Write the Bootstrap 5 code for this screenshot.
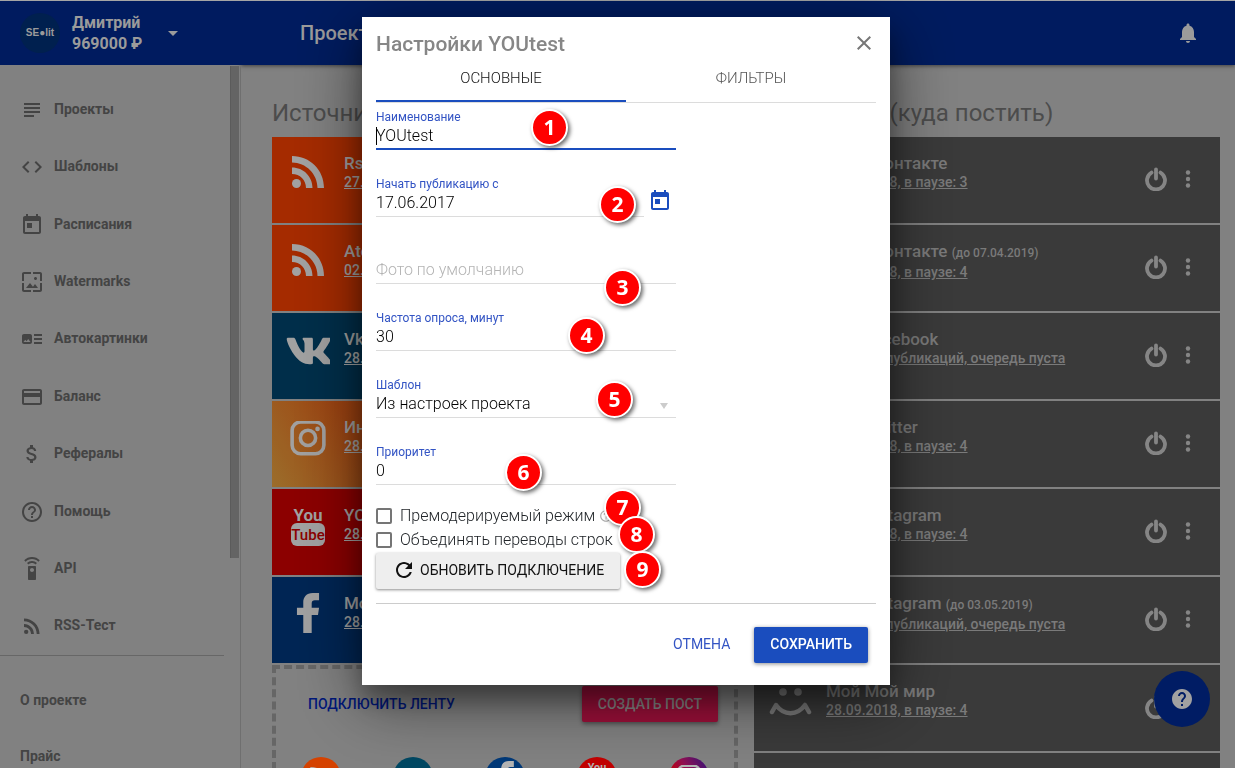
<!DOCTYPE html>
<html lang="ru">
<head>
<meta charset="utf-8">
<meta name="viewport" content="width=device-width, initial-scale=1">
<title>Настройки YOUtest</title>
<link href="https://cdn.jsdelivr.net/npm/bootstrap@5.3.0/dist/css/bootstrap.min.css" rel="stylesheet">
<style>
:root{--brand:#1a4dbe}
html,body{height:100%}
body{font-family:Roboto,"Liberation Sans",sans-serif;background:#909090;overflow:hidden;font-size:16px;line-height:20px}
svg{fill:currentColor;flex:none}
.i24{width:24px;height:24px}
/* page frame */
.shell{height:100vh;border-top:1px solid #b8b8b8;overflow:hidden}
.side{width:241px;border-right:1px solid #7c7c7c;position:relative;flex:none}
.side-head{height:64px;background:#001f6a;color:#adadad;padding-left:20px;margin-right:-1px}
.avatar{width:40px;height:40px;background:#002458;font:bold 10px/40px "Liberation Sans",sans-serif;flex:none}
.who{font-weight:700;line-height:21px;margin-left:12px;width:96px}
.menu{height:574px;margin-top:16px}
.menu a,.menu2 a{color:#4c4c4c;font:bold 14px/20px Roboto,sans-serif;text-decoration:none}
.menu a{padding-left:20px;gap:10px}
.menu a span{margin-bottom:2px}
.menu2{border-top:1px solid #737373;margin-right:16px;padding-top:16px}
.menu2 a{height:56px;padding-left:20px}
.scroller{position:absolute;right:1px;top:65px;width:9px;height:492px;background:#707070;border-left:1px solid #666}
.topbar{height:64px;background:#001f6a;color:#adadad;padding:0 35px 0 59px;box-shadow:0 1px 4px rgba(0,0,0,.5)}
.topbar h1{font-size:20px;font-weight:500;line-height:24px}
.board{padding:32px 15px 0 31px;gap:16px}
.board h2{font-size:24px;font-weight:400;line-height:32px;color:#555;margin:0 0 8px}
.feed{height:86px;margin-bottom:2px;padding:16px 29px 0 14px;color:#b4b4b4}
.feed .pic{width:44px;height:44px;margin-right:14px}
.feed .txt{flex:1;min-width:0;font-size:17px;font-weight:500;line-height:20px;white-space:nowrap}
.feed .txt a{display:block;color:inherit;font-size:14px;line-height:18px}
.feed small{font-size:12px}
.c-rss{background:#b83000}.c-vk{background:#003453}.c-yt{background:#9c0000}.c-fb{background:#002a5e}
.c-ig{background:linear-gradient(60deg,#ad7a30 0,#b04c14 22%,#b83000 50%)}
.target{background:#414141;color:#888}
.target .acts{margin-top:14px;gap:17px;color:#959595}
.target .acts button{background:none;border:0;padding:0;color:inherit;display:flex;height:24px}
.connect{border:4px dashed #727272;height:190px;padding:17px 16px}
.connect .btn{font:500 14px/20px Roboto,sans-serif;border-radius:2px;padding:7px 15px}
.b-link{color:#001a88}
.b-post{background:#ae1140;color:#999;box-shadow:0 2px 4px rgba(0,0,0,.4)}
.nets{margin-top:35px;gap:52px}
.nets span{width:40px;height:40px;color:#c8c8c8}
.n1{background:#ee4a00}.n2{background:#00506e}.n3{background:#003f86}.n4{background:#d80000}
.n5{background:linear-gradient(60deg,#e00000 20%,#a0105c 55%,#30148c)}
.fab{position:fixed;right:25px;bottom:41px;width:56px;height:56px;border:0;background:#002070;color:#b4b4b4;z-index:5}
/* dialog */
.modal-backdrop{opacity:.1}
.modal{padding-left:17px}
.modal-dialog{max-width:528px;margin:17px auto}
.modal-content{border:0;border-radius:0;padding:0 14px;height:auto;box-shadow:0 15px 20px rgba(0,0,0,.25),0 15px 60px rgba(0,0,0,.55)}
.dlg-head{height:37px;padding-top:14px}
.dlg-head h3{font-size:21px;font-weight:500;line-height:26px;color:#868686;margin:0}
.dlg-head button{border:0;background:none;padding:0;color:#777;width:24px;height:24px;display:flex}
.tabs{border-bottom:1px solid #dcdcdc}
.tabs button{height:48px;border:0;border-bottom:2px solid transparent;background:none;font:300 15px/20px Roboto,sans-serif;color:#555;padding:2px 0 0}
.tabs .on{border-color:var(--brand);color:#111}
.fields{width:300px;padding-top:6px}
.fld{margin-bottom:26px;position:relative}
.fld label{display:block;font-size:12px;line-height:16px;height:16px;color:#3354c4}
.fld input,.fld select{display:block;width:100%;height:25px;border:0;border-bottom:1px solid #dcdcdc;border-radius:0;padding:0 0 3px;background:none;font:300 16px/20px Roboto,sans-serif;color:#000;outline:0;appearance:none}
.fld .cur{border-bottom:2px solid var(--brand)}
.fld.act::after{content:"";position:absolute;left:0;top:18px;height:18px;width:1px;background:#000}
.fld ::placeholder{color:#b4b4b4;opacity:1}
.fld .arrow{position:absolute;right:8px;top:26px;border:4px solid transparent;border-top:6px solid #ccc;border-bottom:0}
.cal{border:0;background:none;padding:0;color:var(--brand);display:flex;margin:8px 4px 0}
.ticks{margin-top:19px}
.tick{height:24px;gap:8px;font-weight:300}
.tick input{width:16px;height:16px;margin:0;border:2px solid #757575}
.tick .form-check-input{border-radius:2px;flex:none}
.tick .hint{width:14px;height:14px;margin-left:-4px;color:#aaa}
.dlg-btn{font:500 14px/20px Roboto,sans-serif;border:0;border-radius:2px;height:36px;padding:0 16px 2px}
.b-refresh{background:#eee;color:#111;font-weight:400;box-shadow:0 1px 3px rgba(0,0,0,.45);gap:4px;margin-top:1px}
.b-save{background:var(--brand);color:#fff;box-shadow:0 1px 4px rgba(0,0,0,.45)}
.b-cancel{background:none;color:#3354c4;font-weight:400}
.dlg-foot{border-top:1px solid #ccc;margin-top:14px;padding:23px 8px 22px;gap:8px}
/* numbered callouts lying over the form */
.pin{position:absolute;width:37px;height:37px;margin:-19px 0 0 -18px;border:2px solid #fff;border-radius:50%;background:#f00;color:#fff;font:bold 21px/33px "Open Sans",sans-serif;text-align:center;box-shadow:2px 2px 4px rgba(0,0,0,.6)}
.p1{left:187px;top:111px}.p2{left:255px;top:188px}.p3{left:260px;top:271px}.p4{left:224px;top:319px}.p5{left:252px;top:383px}
.p6{left:161px;top:456px}.p7{left:260px;top:491px}.p8{left:274px;top:518px}.p9{left:280px;top:553px}
</style>
</head>
<body>
<svg class="d-none" xmlns="http://www.w3.org/2000/svg">
<symbol id="rss" viewBox="0 0 24 24"><circle cx="6.18" cy="17.82" r="2.18"/><path d="M4 4.44v2.83c7.03 0 12.73 5.7 12.73 12.73h2.83c0-8.59-6.97-15.56-15.56-15.56zm0 5.66v2.83c3.9 0 7.07 3.17 7.07 7.07h2.83c0-5.47-4.43-9.9-9.9-9.9z"/></symbol>
<symbol id="rssbig" viewBox="-1 3 44 44"><circle cx="9.5" cy="33.5" r="4.5"/><path d="M5 6C23 6 37 20 37 38h-6.500C30.500 24 19 12.500 5 12.500zM5 17.500C16.500 17.500 25.500 26.500 25.500 38H19c0-8-6-14-14-14z"/></symbol>
<symbol id="vk" viewBox="10 96 529 320"><path d="M545 117.7c3.7-12.5 0-21.7-17.8-21.7h-58.9c-15 0-21.9 7.9-25.6 16.7 0 0-30 73.1-72.4 120.5-13.7 13.7-20 18.1-27.500 18.1-3.7 0-9.4-4.4-9.4-16.900V117.700c0-15-4.2-21.7-16.6-21.7h-92.6c-9.4 0-15 7-15 13.5 0 14.2 21.2 17.5 23.4 57.5v86.8c0 19-3.4 22.5-10.9 22.5-20 0-68.6-73.4-97.4-157.4-5.8-16.3-11.500-22.9-26.6-22.9H38.800c-16.8 0-20.2 7.9-20.2 16.7 0 15.6 20 93.1 93.1 195.5C160.4 378.1 229 416 291.400 416c37.500 0 42.1-8.4 42.1-22.9 0-66.800-3.4-73.1 15.4-73.1 8.7 0 23.700 4.4 58.7 38.1 40 40 46.6 57.9 69 57.9h58.9c16.8 0 25.3-8.4 20.4-25-11.2-34.9-86.9-106.7-90.3-111.5-8.7-11.2-6.2-16.2 0-26.2.1-.1 72-101.3 79.4-135.6z"/></symbol>
<symbol id="ig" viewBox="0 1 34 34"><rect x="2" y="2" width="30" height="30" rx="8" fill="none" stroke="currentColor" stroke-width="3.400"/><circle cx="17" cy="17" r="7.200" fill="none" stroke="currentColor" stroke-width="3.400"/><circle cx="26" cy="8.500" r="2.200"/></symbol>
<symbol id="yt" viewBox="0 0 44 44"><text x="22" y="16" text-anchor="middle" font-family="Roboto" font-weight="700" font-size="17">You</text><rect x="5" y="18" width="34" height="23" rx="6"/><text x="22" y="35" text-anchor="middle" font-family="Roboto" font-size="15" font-weight="500" fill="#9c0000">Tube</text></symbol>
<symbol id="fb" viewBox="0 0 21 38"><path d="M14 38V21h6l1-7h-7v-4c0-2 1-3 3-3h4V0h-6C9 0 6 4 6 9v5H0v7h6v17z"/></symbol>
<symbol id="mm" viewBox="0 0 44 44"><circle cx="15" cy="11" r="3.800"/><circle cx="30" cy="11" r="3.800"/><path d="M4 31l4-7c8 11 21 11 29 0l4 7" fill="none" stroke="currentColor" stroke-width="4.500" stroke-linecap="round" stroke-linejoin="round"/></symbol>
<symbol id="pow" viewBox="0 0 24 24"><path d="M7.500 5.600a9 9 0 1 0 9 0M12 2.500v9" fill="none" stroke="currentColor" stroke-width="3.800" stroke-linecap="round"/></symbol>
<symbol id="dots" viewBox="0 0 6 18"><circle cx="3" cy="2.500" r="2.200"/><circle cx="3" cy="9" r="2.200"/><circle cx="3" cy="15.500" r="2.200"/></symbol>
<symbol id="today" viewBox="0 0 24 24"><path d="M19 3h-1V1h-2v2H8V1H6v2H5c-1.110 0-1.990.9-1.990 2L3 19c0 1.100.89 2 2 2h14c1.100 0 2-.9 2-2V5c0-1.100-.9-2-2-2zm0 16H5V8h14v11zM7 10h5v5H7z"/></symbol>
<symbol id="helpo" viewBox="0 0 24 24"><path d="M11 18h2v-2h-2v2zm1-16C6.480 2 2 6.480 2 12s4.480 10 10 10 10-4.480 10-10S17.520 2 12 2zm0 18c-4.410 0-8-3.590-8-8s3.590-8 8-8 8 3.590 8 8-3.590 8-8 8zm0-14c-2.210 0-4 1.790-4 4h2c0-1.100.9-2 2-2s2 .9 2 2c0 2-3 1.750-3 5h2c0-2.250 3-2.500 3-5 0-2.210-1.790-4-4-4z"/></symbol>
</svg>

<div class="shell d-flex">
<aside class="side">
  <div class="side-head d-flex align-items-center">
    <div class="avatar rounded-circle text-center">SE●lit</div>
    <div class="who">Дмитрий<br>969000 ₽</div>
    <svg width="10" height="5" viewBox="0 0 10 5"><path d="M0 0h10L5 5z"/></svg>
  </div>
  <nav class="menu d-flex flex-column">
    <a href="#" class="d-flex align-items-center flex-fill"><svg class="i24" viewBox="0 0 24 24"><path d="M14 17H4v2h10v-2zm6-8H4v2h16V9zM4 15h16v-2H4v2zM4 5v2h16V5H4z"/></svg><span>Проекты</span></a>
    <a href="#" class="d-flex align-items-center flex-fill"><svg class="i24" viewBox="0 0 24 24"><path d="M9.400 16.600L4.800 12l4.600-4.600L8 6l-6 6 6 6 1.400-1.400zm5.200 0l4.600-4.600-4.600-4.600L16 6l6 6-6 6-1.400-1.400z"/></svg><span>Шаблоны</span></a>
    <a href="#" class="d-flex align-items-center flex-fill"><svg class="i24"><use href="#today"/></svg><span>Расписания</span></a>
    <a href="#" class="d-flex align-items-center flex-fill"><svg class="i24" viewBox="0 0 24 24"><path d="M4 4h7V2H4c-1.100 0-2 .9-2 2v7h2V4zm6 9l-4 5h12l-3-4-2.030 2.710L10 13zm7-4.500c0-.83-.67-1.500-1.500-1.500S14 7.670 14 8.500s.67 1.500 1.500 1.500S17 9.330 17 8.500zM20 2h-7v2h7v7h2V4c0-1.100-.9-2-2-2zm0 18h-7v2h7c1.100 0 2-.9 2-2v-7h-2v7zM4 13H2v7c0 1.100.9 2 2 2h7v-2H4v-7z"/></svg><span>Watermarks</span></a>
    <a href="#" class="d-flex align-items-center flex-fill"><svg class="i24" viewBox="0 0 24 24"><path d="M22 13h-8v-2h8v2zm0-6h-8v2h8V7zm-8 10h8v-2h-8v2zm-2-8v6c0 1.100-.9 2-2 2H4c-1.100 0-2-.9-2-2V9c0-1.100.9-2 2-2h6c1.100 0 2 .9 2 2zm-1.500 6l-2.250-3-1.750 2.260-1.250-1.510L3.500 15h7z"/></svg><span>Автокартинки</span></a>
    <a href="#" class="d-flex align-items-center flex-fill"><svg class="i24" viewBox="0 0 24 24"><path d="M20 4H4c-1.110 0-1.990.89-1.990 2L2 18c0 1.110.89 2 2 2h16c1.110 0 2-.89 2-2V6c0-1.110-.89-2-2-2zm0 14H4v-6h16v6zm0-10H4V6h16v2z"/></svg><span>Баланс</span></a>
    <a href="#" class="d-flex align-items-center flex-fill"><svg class="i24" viewBox="0 0 24 24"><path d="M11.800 10.900c-2.270-.59-3-1.200-3-2.150 0-1.090 1.010-1.850 2.700-1.850 1.780 0 2.440.85 2.500 2.100h2.210c-.07-1.720-1.120-3.300-3.210-3.810V3h-3v2.160c-1.940.42-3.500 1.680-3.500 3.610 0 2.310 1.910 3.460 4.700 4.130 2.500.6 3 1.480 3 2.410 0 .69-.49 1.790-2.700 1.790-2.060 0-2.870-.92-2.980-2.100h-2.200c.12 2.190 1.760 3.420 3.680 3.830V21h3v-2.150c1.950-.37 3.500-1.500 3.500-3.550 0-2.840-2.430-3.810-4.700-4.400z"/></svg><span>Рефералы</span></a>
    <a href="#" class="d-flex align-items-center flex-fill"><svg class="i24"><use href="#helpo"/></svg><span>Помощь</span></a>
    <a href="#" class="d-flex align-items-center flex-fill"><svg class="i24" viewBox="0 0 24 24"><path d="M15 9H9c-.55 0-1 .45-1 1v12c0 .55.45 1 1 1h6c.55 0 1-.45 1-1V10c0-.55-.45-1-1-1zm-3 6c-1.100 0-2-.9-2-2s.9-2 2-2 2 .9 2 2-.9 2-2 2zM7.050 6.050l1.410 1.410C9.370 6.560 10.620 6 12 6s2.630.56 3.540 1.460l1.410-1.410C15.680 4.780 13.930 4 12 4s-3.680.78-4.950 2.050zM12 0C8.960 0 6.210 1.230 4.220 3.220l1.410 1.410C7.260 3.010 9.510 2 12 2s4.740 1.010 6.360 2.640l1.410-1.410C17.790 1.230 15.040 0 12 0z"/></svg><span>API</span></a>
    <a href="#" class="d-flex align-items-center flex-fill"><svg class="i24"><use href="#rss"/></svg><span>RSS-Тест</span></a>
  </nav>
  <nav class="menu2">
    <a href="#" class="d-flex align-items-center">О проекте</a>
    <a href="#" class="d-flex align-items-center">Прайс</a>
  </nav>
  <div class="scroller"></div>
</aside>

<div class="flex-fill">
  <header class="topbar d-flex align-items-center justify-content-between">
    <h1 class="m-0">Проекты</h1>
    <svg class="i24" viewBox="0 0 24 24"><path d="M12 22c1.100 0 2-.9 2-2h-4c0 1.100.89 2 2 2zm6-6v-5c0-3.070-1.640-5.640-4.500-6.320V4c0-.83-.67-1.500-1.500-1.500s-1.500.67-1.500 1.500v.68C7.630 5.360 6 7.920 6 11v5l-2 2v1h16v-1l-2-2z"/></svg>
  </header>
  <main class="board d-flex">
    <section class="col">
      <h2>Источники (откуда)</h2>
      <div class="feed c-rss d-flex"><svg class="pic"><use href="#rssbig"/></svg><div class="txt">Rss лента<a href="#">27.09.2018, в паузе: 3</a></div></div>
      <div class="feed c-rss d-flex"><svg class="pic"><use href="#rssbig"/></svg><div class="txt">Atom лента<a href="#">02.09.2018, в паузе: 3</a></div></div>
      <div class="feed c-vk d-flex"><svg class="pic"><use href="#vk"/></svg><div class="txt">Vk группа<a href="#">28.09.2018, в паузе: 4</a></div></div>
      <div class="feed c-ig d-flex"><svg class="pic p-1"><use href="#ig"/></svg><div class="txt">Инстаграм<a href="#">28.09.2018, в паузе: 4</a></div></div>
      <div class="feed c-yt d-flex"><svg class="pic"><use href="#yt"/></svg><div class="txt">YOUtest<a href="#">28.09.2018, в паузе: 4</a></div></div>
      <div class="feed c-fb d-flex"><svg class="pic pb-1"><use href="#fb"/></svg><div class="txt">Мой Facebook<a href="#">28.09.2018, в паузе: 4</a></div></div>
      <div class="connect">
        <div class="d-flex justify-content-between">
          <button type="button" class="btn b-link">ПОДКЛЮЧИТЬ ЛЕНТУ</button>
          <button type="button" class="btn b-post">СОЗДАТЬ ПОСТ</button>
        </div>
        <div class="nets d-flex justify-content-center">
          <span class="n1 rounded-circle d-flex p-1"><svg width="32" height="32"><use href="#rss"/></svg></span>
          <span class="n2 rounded-circle d-flex p-2"><svg class="i24 pt-2"><use href="#vk"/></svg></span>
          <span class="n3 rounded-circle d-flex p-1"><svg width="32" height="32"><use href="#fb"/></svg></span>
          <span class="n4 rounded-circle d-flex p-1"><svg width="32" height="28"><use href="#yt"/></svg></span>
          <span class="n5 rounded-circle d-flex p-2"><svg class="i24"><use href="#ig"/></svg></span>
        </div>
      </div>
    </section>
    <section class="col">
      <h2>Приёмники (куда постить)</h2>
      <div class="feed target d-flex"><svg class="pic"><use href="#vk"/></svg><div class="txt">Мой Вконтакте<a href="#">27.09.2018, в паузе: 3</a></div><div class="acts d-flex"><button aria-label="Питание"><svg class="i24"><use href="#pow"/></svg></button><button aria-label="Меню"><svg width="6" height="24"><use href="#dots"/></svg></button></div></div>
      <div class="feed target d-flex"><svg class="pic"><use href="#vk"/></svg><div class="txt">Мой Вконтакте <small>(до 07.04.2019)</small><a href="#">28.09.2018, в паузе: 4</a></div><div class="acts d-flex"><button aria-label="Питание"><svg class="i24"><use href="#pow"/></svg></button><button aria-label="Меню"><svg width="6" height="24"><use href="#dots"/></svg></button></div></div>
      <div class="feed target d-flex"><svg class="pic"><use href="#fb"/></svg><div class="txt">Мой Facebook<a href="#">Не было публикаций, очередь пуста</a></div><div class="acts d-flex"><button aria-label="Питание"><svg class="i24"><use href="#pow"/></svg></button><button aria-label="Меню"><svg width="6" height="24"><use href="#dots"/></svg></button></div></div>
      <div class="feed target d-flex"><svg class="pic"></svg><div class="txt">Мой Twitter<a href="#">28.09.2018, в паузе: 4</a></div><div class="acts d-flex"><button aria-label="Питание"><svg class="i24"><use href="#pow"/></svg></button><button aria-label="Меню"><svg width="6" height="24"><use href="#dots"/></svg></button></div></div>
      <div class="feed target d-flex"><svg class="pic p-1"><use href="#ig"/></svg><div class="txt">Мой Instagram<a href="#">28.09.2018, в паузе: 4</a></div><div class="acts d-flex"><button aria-label="Питание"><svg class="i24"><use href="#pow"/></svg></button><button aria-label="Меню"><svg width="6" height="24"><use href="#dots"/></svg></button></div></div>
      <div class="feed target d-flex"><svg class="pic p-1"><use href="#ig"/></svg><div class="txt">Мой Instagram <small>(до 03.05.2019)</small><a href="#">Не было публикаций, очередь пуста</a></div><div class="acts d-flex"><button aria-label="Питание"><svg class="i24"><use href="#pow"/></svg></button><button aria-label="Меню"><svg width="6" height="24"><use href="#dots"/></svg></button></div></div>
      <div class="feed target d-flex"><svg class="pic"><use href="#mm"/></svg><div class="txt">Мой Мой мир<a href="#">28.09.2018, в паузе: 4</a></div><div class="acts d-flex"><button aria-label="Питание"><svg class="i24"><use href="#pow"/></svg></button><button aria-label="Меню"><svg width="6" height="24"><use href="#dots"/></svg></button></div></div>
      <div class="feed target"></div>
    </section>
  </main>
</div>
</div>
<button type="button" class="fab rounded-circle d-flex align-items-center justify-content-center" aria-label="Справка"><svg class="i24" viewBox="0 0 24 24"><path d="M12 2C6.480 2 2 6.480 2 12s4.480 10 10 10 10-4.480 10-10S17.520 2 12 2zm1 17h-2v-2h2v2zm2.070-7.750l-.9.92C13.450 12.900 13 13.500 13 15h-2v-.5c0-1.100.45-2.100 1.170-2.830l1.240-1.260c.37-.36.59-.86.59-1.410 0-1.100-.9-2-2-2s-2 .9-2 2H8c0-2.210 1.790-4 4-4s4 1.790 4 4c0 .88-.36 1.680-.93 2.250z"/></svg></button>

<div class="modal-backdrop"></div>
<div class="modal d-block overflow-hidden" role="dialog" aria-labelledby="dlgTitle">
<div class="modal-dialog">
<form class="modal-content">
  <div class="dlg-head d-flex justify-content-between">
    <h3 id="dlgTitle">Настройки YOUtest</h3>
    <button type="button" aria-label="Закрыть"><svg class="i24" viewBox="0 0 24 24"><path d="M19 6.410L17.590 5 12 10.590 6.410 5 5 6.410 10.590 12 5 17.590 6.410 19 12 13.410 17.590 19 19 17.590 13.410 12z"/></svg></button>
  </div>
  <div class="tabs d-flex">
    <button type="button" class="on col">ОСНОВНЫЕ</button>
    <button type="button" class="col">ФИЛЬТРЫ</button>
  </div>
  <div class="fields">
    <div class="fld act"><label for="fName">Наименование</label><input id="fName" class="cur" type="text" value="YOUtest"></div>
    <div class="fld d-flex align-items-center"><div class="flex-fill"><label for="fDate">Начать публикацию с</label><input id="fDate" type="text" value="17.06.2017"></div><button type="button" class="cal" aria-label="Календарь"><svg class="i24"><use href="#today"/></svg></button></div>
    <div class="fld"><label for="fPhoto"></label><input id="fPhoto" type="text" placeholder="Фото по умолчанию"></div>
    <div class="fld"><label for="fFreq">Частота опроса, минут</label><input id="fFreq" type="text" value="30"></div>
    <div class="fld"><label for="fTpl">Шаблон</label><select id="fTpl"><option>Из настроек проекта</option></select><span class="arrow"></span></div>
    <div class="fld mb-0"><label for="fPrio">Приоритет</label><input id="fPrio" type="text" value="0"></div>
    <div class="ticks">
      <div class="tick d-flex align-items-center"><input class="form-check-input" type="checkbox" id="cMod"><label for="cMod">Премодерируемый режим</label><svg class="hint"><use href="#helpo"/></svg></div>
      <div class="tick d-flex align-items-center"><input class="form-check-input" type="checkbox" id="cJoin"><label for="cJoin">Объединять переводы строк</label></div>
    </div>
    <button type="button" class="dlg-btn b-refresh d-flex align-items-center"><svg class="i24" viewBox="0 0 24 24"><path d="M17.650 6.350C16.200 4.900 14.210 4 12 4c-4.420 0-7.990 3.580-7.990 8s3.570 8 7.990 8c3.730 0 6.840-2.550 7.730-6h-2.080c-.82 2.330-3.040 4-5.650 4-3.310 0-6-2.690-6-6s2.690-6 6-6c1.660 0 3.140.69 4.220 1.780L13 11h7V4l-2.350 2.350z"/></svg>ОБНОВИТЬ ПОДКЛЮЧЕНИЕ</button>
  </div>
  <div class="dlg-foot d-flex justify-content-end">
    <button type="button" class="dlg-btn b-cancel">ОТМЕНА</button>
    <button type="submit" class="dlg-btn b-save">СОХРАНИТЬ</button>
  </div>
  <span class="pin p1">1</span><span class="pin p2">2</span><span class="pin p3">3</span><span class="pin p4">4</span><span class="pin p5">5</span><span class="pin p6">6</span><span class="pin p7">7</span><span class="pin p8">8</span><span class="pin p9">9</span>
</form>
</div>
</div>
<script src="https://cdn.jsdelivr.net/npm/bootstrap@5.3.0/dist/js/bootstrap.bundle.min.js"></script>
</body>
</html>
